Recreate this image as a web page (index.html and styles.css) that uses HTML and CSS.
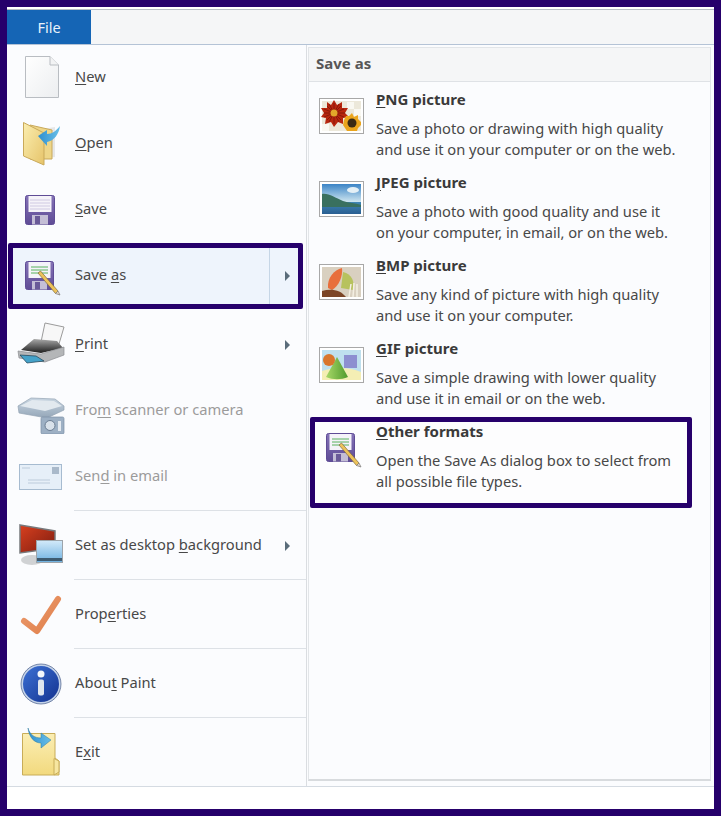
FILE: index.html
```html
<!DOCTYPE html>
<html lang="en">

<head>
    <meta charset="UTF-8">
    <title>Paint - File menu</title>
    <link rel="stylesheet" href="styles.css">
</head>

<body>
    <!-- shared gradients and floppy icons -->
    <svg class="defs" width="0" height="0">
        <defs>
            <linearGradient id="g-page" x1="0" y1="0" x2="1" y2="1">
                <stop offset="0" stop-color="#ffffff" />
                <stop offset="1" stop-color="#eceef0" />
            </linearGradient>
            <linearGradient id="g-folder" x1="0" y1="0" x2="1" y2="1">
                <stop offset="0" stop-color="#fbeeb0" />
                <stop offset="1" stop-color="#e6c46a" />
            </linearGradient>
            <linearGradient id="g-purple" x1="0" y1="0" x2="0" y2="1">
                <stop offset="0" stop-color="#8472b6" />
                <stop offset="1" stop-color="#5f4c96" />
            </linearGradient>
            <linearGradient id="g-arrow" x1="0" y1="0" x2="1" y2="0">
                <stop offset="0" stop-color="#2f8fd0" />
                <stop offset="1" stop-color="#69c0e8" />
            </linearGradient>
            <linearGradient id="g-printer" x1="0" y1="0" x2="0" y2="1">
                <stop offset="0" stop-color="#a8a8a8" />
                <stop offset="1" stop-color="#1e1e1e" />
            </linearGradient>
            <linearGradient id="g-steel" x1="0" y1="0" x2="0" y2="1">
                <stop offset="0" stop-color="#c9d6e2" />
                <stop offset="1" stop-color="#94a6b8" />
            </linearGradient>
            <linearGradient id="g-red" x1="0" y1="0" x2="1" y2="1">
                <stop offset="0" stop-color="#d8401f" />
                <stop offset="1" stop-color="#7c1c10" />
            </linearGradient>
            <linearGradient id="g-screen" x1="0" y1="0" x2="0" y2="1">
                <stop offset="0" stop-color="#d3eafa" />
                <stop offset="1" stop-color="#6db0e0" />
            </linearGradient>
            <linearGradient id="g-check" x1="0" y1="0" x2="1" y2="1">
                <stop offset="0" stop-color="#eb9a6c" />
                <stop offset="1" stop-color="#e0804c" />
            </linearGradient>
            <linearGradient id="g-info" x1="0" y1="0" x2="1" y2="1">
                <stop offset="0" stop-color="#3d72d6" />
                <stop offset="1" stop-color="#12318e" />
            </linearGradient>
            <linearGradient id="g-exit" x1="0" y1="0" x2="0" y2="1">
                <stop offset="0" stop-color="#fbeeb4" />
                <stop offset="1" stop-color="#f2d97e" />
            </linearGradient>
            <linearGradient id="g-sky" x1="0" y1="0" x2="0" y2="1">
                <stop offset="0" stop-color="#3b84c6" />
                <stop offset="1" stop-color="#cfe6f0" />
            </linearGradient>
            <linearGradient id="g-water" x1="0" y1="0" x2="0" y2="1">
                <stop offset="0" stop-color="#3f86b4" />
                <stop offset="1" stop-color="#2a5f92" />
            </linearGradient>
            <linearGradient id="g-cone" x1="0" y1="0" x2="1" y2="0">
                <stop offset="0" stop-color="#a8d868" />
                <stop offset="1" stop-color="#4f9a2c" />
            </linearGradient>
            <symbol id="floppy" viewBox="0 0 30 30">
                <rect x="0.5" y="0.5" width="29" height="29" rx="2" fill="url(#g-purple)" stroke="#5f4c96" />
                <rect x="3.5" y="1" width="23" height="16" fill="#f5f3f9" />
                <path d="M5 5h20M5 8h20M5 11h20M5 14h20" stroke="#cfc9e2" />
                <rect x="7" y="20" width="16" height="9.5" fill="#c4bed6" />
                <rect x="10" y="21" width="5" height="8" fill="#6a5a98" />
            </symbol>
            <symbol id="floppy-edit" viewBox="0 0 36 35">
                <rect x="0.5" y="0.5" width="28" height="28" rx="2" fill="url(#g-purple)" stroke="#5f4c96" />
                <rect x="3.5" y="1" width="22" height="16" fill="#f5f3f9" />
                <path d="M6 6h17M6 9h17M6 12h17" stroke="#58b25c" />
                <rect x="7" y="20" width="15" height="8.500" fill="#c4bed6" />
                <rect x="10" y="21" width="5" height="7.500" fill="#6a5a98" />
                <path d="M13 12L15.500 10L33 30L30.500 32.500Z" fill="#edc25a" stroke="#7c6a3c" stroke-width="0.7" />
                <path d="M30.500 32.500L33 30L35 34Z" fill="#e8d8c8" stroke="#777" stroke-width="0.7" />
            </symbol>
        </defs>
    </svg>

    <div class="window">
        <div class="ribbon">
            <div class="file-tab">File</div>
        </div>

        <div class="backstage">
            <div class="menu">
                <div class="row row-top">
                    <svg class="row-icon" viewBox="0 0 48 48">
                        <path d="M8.500 3.500H33L41.500 12V44.500H8.500Z" fill="url(#g-page)" stroke="#b9bdc2" />
                        <path d="M33 3.500V12H41.500" fill="#f2f3f4" stroke="#b9bdc2" />
                    </svg>
                    <span class="label"><u>N</u>ew</span>
                </div>
                <div class="row row-top">
                    <svg class="row-icon" viewBox="0 0 48 48">
                        <path d="M12 12L38 8V38L14 41Z" fill="#d8d8d8" opacity="0.6" />
                        <path d="M13 6L35 11V40H13Z" fill="#eed688" stroke="#c9a95a" />
                        <path d="M6.500 3.500L27 14V46L6.500 37Z" fill="url(#g-folder)" stroke="#c9a95a" />
                        <path d="M21 17L30 11V15C35 15 39 12 43 7C42 15 37 22 30 23V27Z" fill="url(#g-arrow)" />
                    </svg>
                    <span class="label"><u>O</u>pen</span>
                </div>
                <div class="row row-top">
                    <svg class="row-icon" viewBox="0 0 48 48">
                        <use href="#floppy" x="8" y="10" width="30" height="30" />
                    </svg>
                    <span class="label"><u>S</u>ave</span>
                </div>
                <div class="row row-top row-active">
                    <svg class="row-icon" viewBox="0 0 48 48">
                        <use href="#floppy-edit" x="8" y="10" width="36" height="35" />
                    </svg>
                    <span class="label">Save <u>a</u>s</span>
                    <span class="split"><i class="arrow"></i></span>
                </div>
                <div class="row row-print">
                    <svg class="row-icon" viewBox="0 0 48 48">
                        <path d="M28 3L47 7L42 24L24 22Z" fill="#f7f7f7" stroke="#9b9b9b" />
                        <path d="M4 30L17 19L40 21L46 28L24 33Z" fill="url(#g-printer)" />
                        <path d="M1 31L24 34L47 27V35L28 42L2 38Z" fill="#b4b6b8" stroke="#8b8d90" stroke-width="0.7" />
                        <path d="M3 35L19 36L27 41L10 43Z" fill="#45a2c9" stroke="#1e3e50" stroke-width="0.7" />
                    </svg>
                    <span class="label"><u>P</u>rint</span>
                    <i class="arrow"></i>
                </div>
                <div class="row row-off">
                    <svg class="row-icon" viewBox="0 0 48 48">
                        <path d="M1 20L14 12L38 13L47 20V24L30 32L2 27Z" fill="url(#g-steel)" stroke="#93a3b3" stroke-width="0.7" />
                        <path d="M3 20L15 14L37 15L45 20L28 25Z" fill="#e2e9ef" />
                        <rect x="24" y="31" width="23" height="17" rx="1.500" fill="#9db0c4" stroke="#7d90a6" stroke-width="0.7" />
                        <circle cx="33" cy="39.500" r="5" fill="#d8e1ea" stroke="#6b7d92" />
                        <rect x="41" y="35" width="3" height="10" fill="#e4eaf0" />
                    </svg>
                    <span class="label">Fro<u>m</u> scanner or camera</span>
                </div>
                <div class="row row-off">
                    <svg class="row-icon" viewBox="0 0 48 48">
                        <rect x="2.500" y="12.500" width="42" height="25" fill="#e6eff8" stroke="#a6bbd0" />
                        <rect x="35" y="15" width="7" height="7" fill="#a9b9ca" />
                        <path d="M11 28H33M11 31H33M5 16H13" stroke="#bccbdb" />
                    </svg>
                    <span class="label">Sen<u>d</u> in email</span>
                </div>
                <div class="sep"></div>
                <div class="row row-tall">
                    <svg class="row-icon" viewBox="0 0 48 48">
                        <ellipse cx="15" cy="39" rx="11" ry="5" fill="#d0d2d4" />
                        <path d="M3 4L38 10V27L3 32Z" fill="url(#g-red)" stroke="#77797c" stroke-width="1.500" />
                        <rect x="19.500" y="19.500" width="26" height="22" fill="url(#g-screen)" stroke="#9da4aa" />
                        <rect x="20" y="37" width="25" height="3" fill="#3f5b70" />
                    </svg>
                    <span class="label">Set as desktop <u>b</u>ackground</span>
                    <i class="arrow"></i>
                </div>
                <div class="sep"></div>
                <div class="row row-tall">
                    <svg class="row-icon" viewBox="0 0 48 48">
                        <path d="M7 31L20 41L41 9" fill="none" stroke="url(#g-check)" stroke-width="6" stroke-linecap="round" stroke-linejoin="round" />
                    </svg>
                    <span class="label">Prop<u>e</u>rties</span>
                </div>
                <div class="sep"></div>
                <div class="row row-tall">
                    <svg class="row-icon" viewBox="0 0 48 48">
                        <circle cx="24" cy="25" r="19" fill="url(#g-info)" stroke="#c3d2e8" stroke-width="2" />
                        <circle cx="24" cy="25" r="20" fill="none" stroke="#4a5f8a" stroke-width="0.7" />
                        <circle cx="24" cy="15" r="3.500" fill="#f4f7fb" />
                        <rect x="21" y="20.500" width="6" height="16" rx="2" fill="#dfe6ee" />
                    </svg>
                    <span class="label">Abou<u>t</u> Paint</span>
                </div>
                <div class="sep"></div>
                <div class="row row-tall">
                    <svg class="row-icon" viewBox="0 0 48 48">
                        <path d="M5.500 5.500H38V30L42 33V47H5.500Z" fill="url(#g-exit)" stroke="#c8ac58" />
                        <path d="M37 30.500L42 33V44L37 47Z" fill="#f7e6a0" stroke="#c8ac58" />
                        <path d="M11 0C13 7 18 10 24 10V5L34 12L24 20V15C17 15 12 9 11 0Z" fill="url(#g-arrow)" stroke="#2e7d9e" stroke-width="0.5" />
                    </svg>
                    <span class="label">E<u>x</u>it</span>
                </div>
            </div>

            <div class="panel">
                <div class="panel-title">Save as</div>
                <div class="item">
                    <svg class="thumb" viewBox="0 0 45 36">
                        <rect x="0.500" y="0.500" width="44" height="35" fill="#fff" stroke="#a8a8a8" />
                        <rect x="3" y="3" width="39" height="30" fill="#ece8da" />
                        <path d="M28 4h7v7h-7zM35 11h7v7h-7zM3 26h7v7H3z" fill="#f9f8f2" />
                        <path d="M15 2L18 7L23 4L23 10L29 10L26 15L30 19L24 20L24 26L19 24L15 29L12 24L6 26L7 20L2 19L5 15L2 10L8 10L8 4L12 7Z" fill="#b8260f" />
                        <path d="M15 5V26M5 15H26M8 8L22 22M22 8L8 22M10 6L20 24M20 6L10 24M5 11L25 19M25 11L5 19" stroke="#7c1508" stroke-width="0.8" />
                        <circle cx="15" cy="15" r="3.500" fill="#e3a82a" />
                        <path d="M33 15L35 19L39 17L39 21L42 24V27L39 30L38 33H28L26 30L24 27L25 22L27 18L30 18Z" fill="#eba51c" />
                        <circle cx="33" cy="25" r="4.500" fill="#3a2a14" />
                    </svg>
                    <div class="item-text">
                        <h3><u>P</u>NG picture</h3>
                        <p>Save a photo or drawing with high quality<br>and use it on your computer or on the web.</p>
                    </div>
                </div>
                <div class="item">
                    <svg class="thumb" viewBox="0 0 45 36">
                        <rect x="0.500" y="0.500" width="44" height="35" fill="#fff" stroke="#a8a8a8" />
                        <rect x="3" y="3" width="39" height="18" fill="url(#g-sky)" />
                        <rect x="3" y="21" width="39" height="12" fill="url(#g-water)" />
                        <path d="M3 13C10 12 16 17 24 20C30 22 36 22 42 24V26H3Z" fill="#39705f" />
                        <ellipse cx="34" cy="9" rx="6" ry="3" fill="#e4f0f6" />
                    </svg>
                    <div class="item-text">
                        <h3><u>J</u>PEG picture</h3>
                        <p>Save a photo with good quality and use it<br>on your computer, in email, or on the web.</p>
                    </div>
                </div>
                <div class="item">
                    <svg class="thumb" viewBox="0 0 45 36">
                        <rect x="0.500" y="0.500" width="44" height="35" fill="#fff" stroke="#a8a8a8" />
                        <rect x="3" y="3" width="39" height="30" fill="#d9d0c0" />
                        <path d="M24 8C33 10 36 18 34 26L22 24Z" fill="#b7c25e" />
                        <path d="M9 24C8 14 15 6 23 4C24 12 20 22 13 26Z" fill="#e86f3c" />
                        <path d="M3 27C12 24 22 26 27 33H3Z" fill="#7c4526" />
                        <path d="M30 33L32 20M34 33L35 19M38 33L38 20" stroke="#f4efe2" stroke-width="1.500" />
                    </svg>
                    <div class="item-text">
                        <h3><u>B</u>MP picture</h3>
                        <p>Save any kind of picture with high quality<br>and use it on your computer.</p>
                    </div>
                </div>
                <div class="item">
                    <svg class="thumb" viewBox="0 0 45 36">
                        <rect x="0.500" y="0.500" width="44" height="35" fill="#fff" stroke="#a8a8a8" />
                        <rect x="3" y="3" width="39" height="30" fill="#bfe0ee" />
                        <path d="M3 24C15 20 30 20 42 25V33H3Z" fill="#f4eeb4" />
                        <rect x="25" y="8" width="13" height="13" fill="#8d8fd0" />
                        <path d="M18 10L29 30C22 33 14 33 7 30Z" fill="url(#g-cone)" />
                        <circle cx="10" cy="13" r="6" fill="#d9762c" />
                    </svg>
                    <div class="item-text">
                        <h3><u>G</u>IF picture</h3>
                        <p>Save a simple drawing with lower quality<br>and use it in email or on the web.</p>
                    </div>
                </div>
                <div class="item item-marked">
                    <svg class="thumb-floppy" viewBox="0 0 36 35">
                        <use href="#floppy-edit" width="36" height="35" />
                    </svg>
                    <div class="item-text">
                        <h3><u>O</u>ther formats</h3>
                        <p>Open the Save As dialog box to select from<br>all possible file types.</p>
                    </div>
                </div>
            </div>
        </div>

        <div class="status"></div>
    </div>
</body>

</html>
```

FILE: styles.css
```css
* {
    margin: 0;
    padding: 0;
    box-sizing: border-box;
}

body {
    background-color: #26006b;
    font-family: "Noto Sans", "Open Sans", "Liberation Sans", sans-serif;
    font-size: 14.7px;
    color: #484848;
}

.defs {
    position: absolute;
}

.window {
    width: 721px;
    height: 816px;
    border: 7px solid #26006b;
    background-color: #fff;
    display: flex;
    flex-direction: column;
}

.ribbon {
    height: 36px;
    margin-top: 2px;
    background-color: #f5f6f7;
    border-top: 1px solid #b6bcc4;
    border-bottom: 1px solid #b4c3d6;
}

.file-tab {
    width: 84px;
    height: 34px;
    background-color: #1565b5;
    color: #e8f2fb;
    font-size: 14.5px;
    line-height: 34px;
    text-align: center;
}

.backstage {
    height: 742px;
    display: flex;
    background-color: #fbfcfe;
    border-bottom: 1px solid #d5dbe2;
}

.menu {
    width: 300px;
    flex: none;
    border-right: 1px solid #dadde1;
}

.row {
    display: flex;
    align-items: center;
    height: 66px;
    padding-left: 10px;
}

.row-icon {
    width: 48px;
    height: 48px;
    flex: none;
    margin-right: 10px;
}

.label {
    flex: 1;
    margin-bottom: 2px;
    white-space: nowrap;
}

u {
    text-underline-offset: 2px;
}

.row-top .row-icon {
    margin-bottom: 2px;
}

.row-top .label {
    margin-bottom: 4px;
}

.row-print {
    margin-top: 2px;
}

.row-off .label {
    color: #9b9b9b;
}

.row-tall {
    height: 68px;
}

.sep {
    height: 1px;
    margin-left: 67px;
    background-color: #dde1e6;
}

.row-print + .row + .row + .sep {
    margin-top: 1px;
}

.arrow {
    flex: none;
    width: 0;
    height: 0;
    margin-top: 2px;
    margin-right: 16px;
    border-left: 5px solid #5a6c7a;
    border-top: 5px solid transparent;
    border-bottom: 5px solid transparent;
}

.row-active {
    width: 295px;
    margin-left: 1px;
    padding-left: 4px;
    border: 5px solid #26006b;
    border-radius: 2px;
    background-color: #eef4fc;
}

.split {
    width: 29px;
    height: 100%;
    flex: none;
    display: flex;
    align-items: center;
    padding-left: 15px;
    border-left: 1px solid #c6d6e6;
}

.split .arrow {
    margin: 0;
}

.panel {
    flex: 1;
    margin: 2px 3px 5px 1px;
    background-color: #fbfcfe;
    border: 1px solid #e2e5e8;
    border-bottom: 2px solid #d8dbde;
}

.panel-title {
    height: 34px;
    padding-left: 7px;
    background-color: #f5f6f7;
    border-bottom: 1px solid #dfe2e6;
    font-size: 15px;
    font-weight: 700;
    line-height: 30px;
    color: #575757;
}

.item {
    display: flex;
    height: 83px;
    padding-left: 10px;
    position: relative;
    top: 5px;
}

.thumb {
    width: 45px;
    height: 36px;
    flex: none;
    margin: 11px 12px 0 0;
}

.item-text h3 {
    font-size: 15px;
    font-weight: 700;
    line-height: 24px;
    color: #3a3a3a;
}

.item-text p {
    margin-top: 7px;
    line-height: 21px;
    white-space: nowrap;
}

.item-marked {
    width: 382px;
    height: 91px;
    margin: -2px 0 0 1px;
    padding-left: 11px;
    border: 5px solid #26006b;
    border-radius: 2px;
    background-color: #fdfdfe;
}

.item-marked .item-text {
    margin-top: -3px;
}

.thumb-floppy {
    width: 36px;
    height: 35px;
    flex: none;
    margin: 11px 14px 0 0;
}

.status {
    flex: 1;
    background-color: #fff;
}
```
